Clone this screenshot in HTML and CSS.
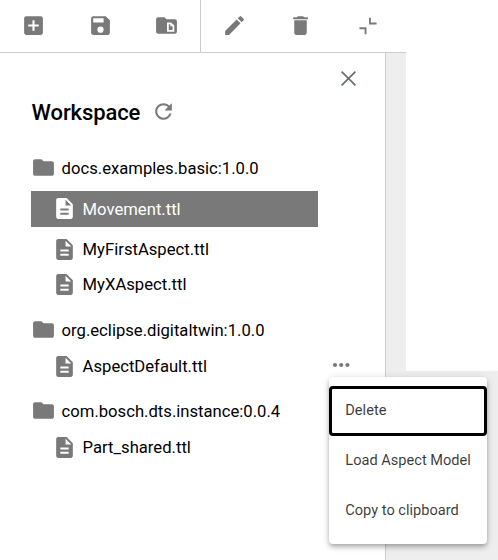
FILE: index.html
```html
<!DOCTYPE html>
<html lang="en">
<head>
<meta charset="utf-8">
<title>Workspace</title>
<link rel="stylesheet" href="styles.css">
</head>
<body>
<svg class="defs" aria-hidden="true">
  <symbol id="folder" viewBox="0 0 24 24"><path d="M10 4H4c-1.100 0-2 .9-2 2v12c0 1.100.9 2 2 2h16c1.100 0 2-.9 2-2V8c0-1.100-.9-2-2-2h-8z"/></symbol>
  <symbol id="file" viewBox="0 0 24 24"><path d="M14 2H6c-1.100 0-2 .9-2 2v16c0 1.100.9 2 2 2h12c1.100 0 2-.9 2-2V8zm2 16H8v-2h8zm0-4H8v-2h8zm-3-5V3.500L18.500 9z"/></symbol>
</svg>
<div class="app">
  <header class="toolbar">
    <div class="tools files">
      <svg class="icon" viewBox="0 0 24 24"><path d="M19 3H5a2 2 0 0 0-2 2v14a2 2 0 0 0 2 2h14a2 2 0 0 0 2-2V5a2 2 0 0 0-2-2zm-2 10h-4v4h-2v-4H7v-2h4V7h2v4h4z"/></svg>
      <svg class="icon" viewBox="0 0 24 24"><path d="M17 3H5a2 2 0 0 0-2 2v14a2 2 0 0 0 2 2h14c1.100 0 2-.9 2-2V7zm-5 16a3 3 0 1 1 0-6 3 3 0 0 1 0 6zm3-10H5V5h10z"/></svg>
      <svg class="icon" viewBox="0 0 24 24"><path fill-rule="evenodd" d="M20 6h-8l-2-2H4a2 2 0 0 0-2 2v12a2 2 0 0 0 2 2h16a2 2 0 0 0 2-2V8a2 2 0 0 0-2-2zM12.500 9H16.500L19.500 12V18H12.500zM14.200 10.700V16.300H17.800V12.800H15.700V10.700z"/></svg>
    </div>
    <div class="tools edit">
      <svg class="icon" viewBox="0 0 24 24"><path d="M3 17.250V21h3.750L17.810 9.940l-3.750-3.750zM20.710 7.040a1 1 0 0 0 0-1.410l-2.340-2.340a1 1 0 0 0-1.410 0l-1.830 1.830 3.750 3.750z"/></svg>
      <svg class="icon" viewBox="0 0 24 24"><path d="M6 19c0 1.100.9 2 2 2h8c1.100 0 2-.9 2-2V7H6zM19 4h-3.500l-1-1h-5l-1 1H5v2h14z"/></svg>
      <svg class="icon" viewBox="0 0 24 24"><path d="M13.500 4.500h1.800v4.700H20.700v1.800h-7.200zM4.300 13.700h6.700v6.800H9.200v-5H4.300z"/></svg>
    </div>
  </header>
  <div class="body">
    <aside class="sidebar">
      <div class="close-row"><svg class="close" viewBox="0 0 16 16"><path d="M1.500 1.500l13 13M14.500 1.500l-13 13"/></svg></div>
      <div class="heading">
        <h1>Workspace</h1>
        <svg class="icon" viewBox="0 0 24 24"><path d="M17.650 6.350A7.960 7.960 0 0 0 12 4a8 8 0 1 0 7.730 10h-2.080A6 6 0 1 1 12 6c1.660 0 3.140.69 4.220 1.780L13 11h7V4z"/></svg>
      </div>
      <section class="group">
        <div class="folder"><svg class="icon"><use href="#folder"/></svg><span>docs.examples.basic:1.0.0</span></div>
        <div class="file selected"><svg class="icon"><use href="#file"/></svg><span>Movement.ttl</span></div>
        <div class="file"><svg class="icon"><use href="#file"/></svg><span>MyFirstAspect.ttl</span></div>
        <div class="file"><svg class="icon"><use href="#file"/></svg><span>MyXAspect.ttl</span></div>
      </section>
      <section class="group">
        <div class="folder"><svg class="icon"><use href="#folder"/></svg><span>org.eclipse.digitaltwin:1.0.0</span></div>
        <div class="file">
          <svg class="icon"><use href="#file"/></svg><span>AspectDefault.ttl</span>
          <svg class="more" viewBox="0 0 18 6"><circle cx="3" cy="3" r="2.100"/><circle cx="9.200" cy="3" r="2.100"/><circle cx="15.400" cy="3" r="2.100"/></svg>
          <div class="menu">
            <div class="item focused">Delete</div>
            <div class="item">Load Aspect Model</div>
            <div class="item">Copy to clipboard</div>
          </div>
        </div>
      </section>
      <section class="group">
        <div class="folder"><svg class="icon"><use href="#folder"/></svg><span>com.bosch.dts.instance:0.0.4</span></div>
        <div class="file"><svg class="icon"><use href="#file"/></svg><span>Part_shared.ttl</span></div>
      </section>
    </aside>
    <div class="canvas"><div class="blank"></div></div>
  </div>
</div>
</body>
</html>
```
FILE: styles.css
```css
* { box-sizing: border-box; }
body { margin: 0; background: #fff; color: #000; font-family: Roboto, sans-serif; font-size: 16.65px; overflow: hidden; }
.defs { position: absolute; width: 0; height: 0; }
.app { width: 498px; height: 560px; display: flex; flex-direction: column; }
.icon { width: 25px; height: 25px; flex: none; fill: #797979; }
.toolbar { width: 406px; height: 53px; display: flex; border-bottom: 1px solid #ccc; }
.tools { display: flex; align-items: flex-start; padding-top: 13px; gap: 41.500px; }
.files { width: 201px; padding-left: 21px; border-right: 1px solid #ccc; }
.edit { padding-left: 20.600px; gap: 42px; }
.edit .icon:nth-child(2) { margin-left: -.6px; }
.body { flex: 1; display: flex; }
.sidebar { width: 386px; border-right: 1px solid #ccc; padding-left: 31px; }
.close-row { height: 41px; padding: 17px 28px 0 0; display: flex; justify-content: flex-end; }
.close { width: 17px; height: 17px; fill: none; stroke: #667169; stroke-width: 1.600; }
.heading { height: 37px; padding-left: .6px; display: flex; align-items: center; gap: 10.400px; }
.heading .icon { margin-top: -2px; }
h1 { margin: 0; font-size: 22px; font-weight: 500; letter-spacing: -.1px; }
.group { padding-bottom: 10px; }
.group:first-of-type { padding-top: 19px; }
.group:nth-of-type(2) { padding-bottom: 9px; }
.folder { height: 36px; display: flex; align-items: center; gap: 5.600px; }
.folder .icon { margin-top: -1px; }
.file { position: relative; width: 287px; height: 35px; padding-left: 21px; display: flex; align-items: center; gap: 5.600px; }
.folder + .file:not(.selected) { height: 36px; }
.file.selected { height: 36px; margin: 5px 0; background: #797979; color: #fff; }
.selected .icon { fill: #fff; margin-top: -2px; }
.more { position: absolute; left: 301px; top: 14px; width: 18px; height: 6px; fill: #797979; }
.menu { position: absolute; z-index: 1; left: 298px; top: 29px; width: 158px; height: 167px; padding: 9px 0 8px; background: #fff; border-radius: 4px; box-shadow: 0 2px 4px -1px rgba(0,0,0,.2), 0 4px 5px rgba(0,0,0,.14), 0 1px 10px rgba(0,0,0,.12); font-size: 14.600px; color: rgba(0,0,0,.78); }
.item { height: 50px; padding: 0 0 3px 16.300px; display: flex; align-items: center; white-space: nowrap; }
.focused { border: 3px solid #000; border-radius: 4px; padding-left: 13.300px; }
.canvas { flex: 1; background: #eee; padding-left: 20px; }
.blank { height: 318px; background: #fff; }
```
